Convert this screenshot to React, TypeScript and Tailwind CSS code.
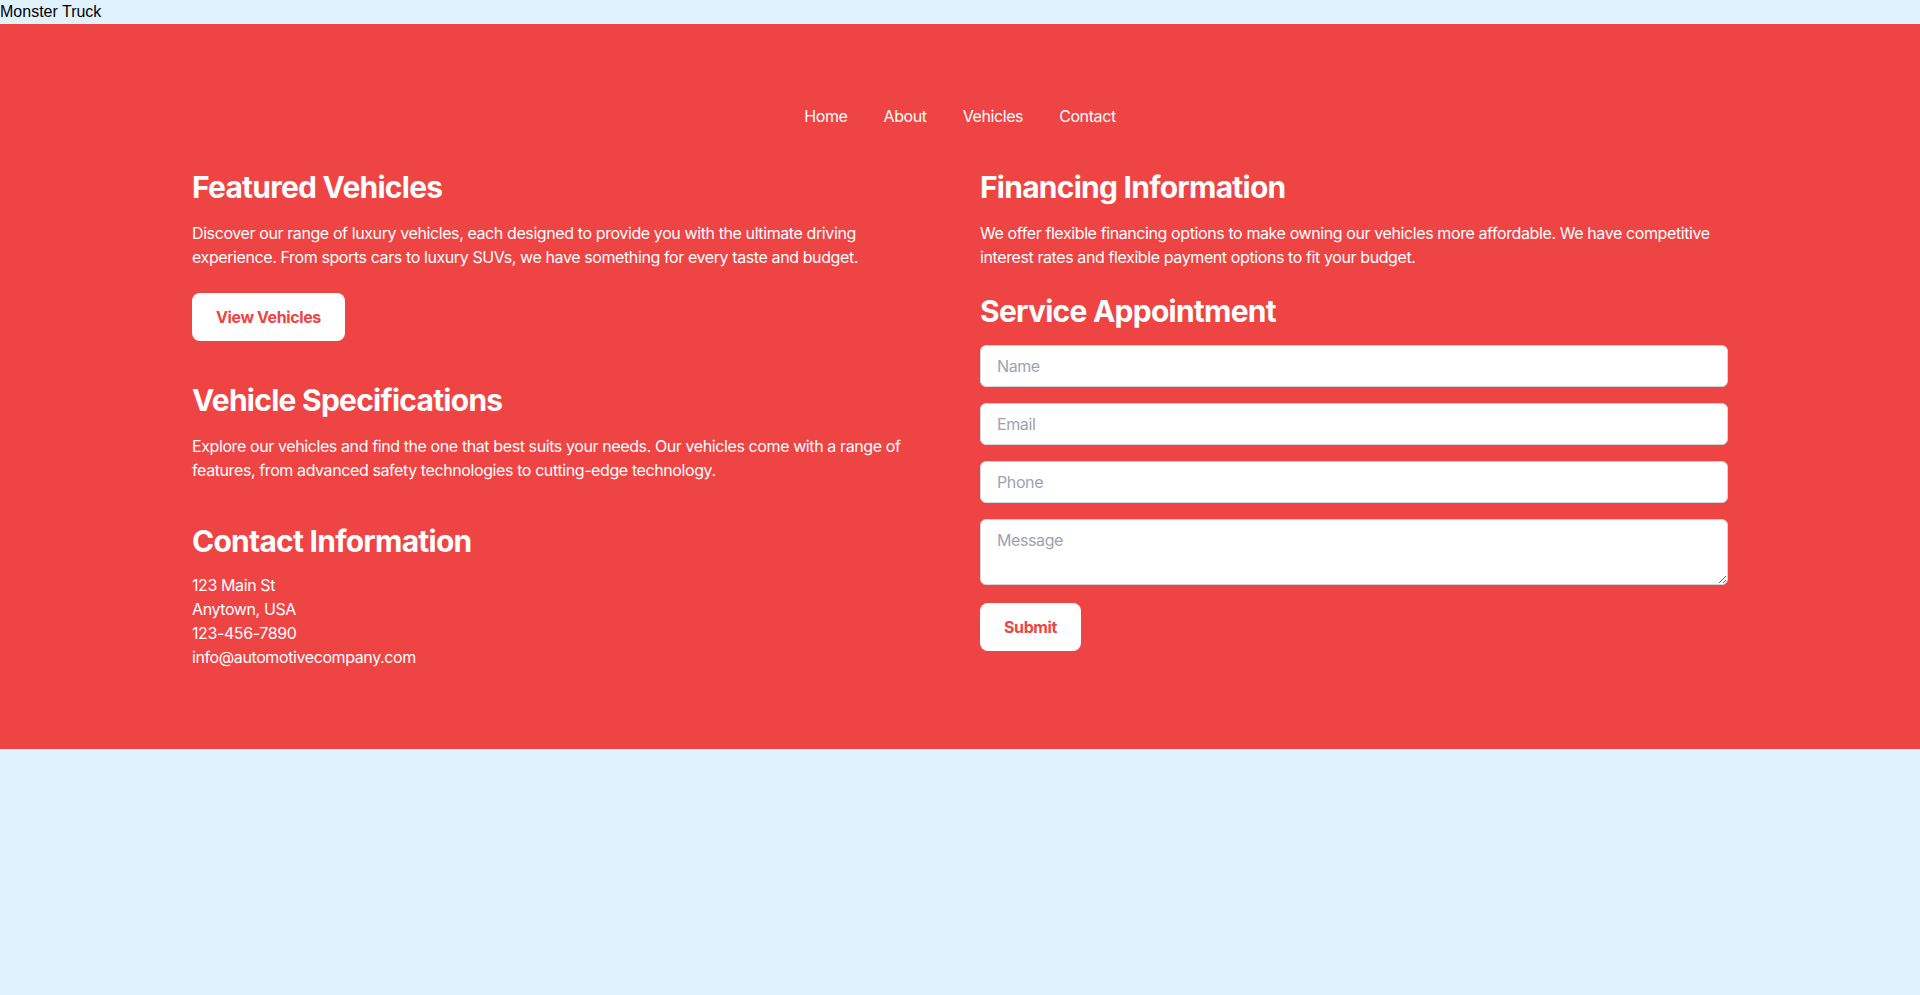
import { FormEvent } from "react";

const links = ["Home", "About", "Vehicles", "Contact"];

function App() {
  const submit = (e: FormEvent) => {
    e.preventDefault();
  };

  return (
    <div className="min-h-screen bg-[#e0f2fe] font-['Inter','Noto_Sans',sans-serif] text-base tracking-[-0.025em]">
      <div className="font-['Liberation_Sans',Arial,sans-serif] leading-6 tracking-normal text-black">
        Monster Truck
      </div>

      <section className="bg-[#ef4444] pt-20 pb-20 text-white">
        <nav className="mb-[41px] flex justify-center gap-9 leading-6">
          {links.map((l) => (
            <a key={l} href="#" className="hover:underline">
              {l}
            </a>
          ))}
        </nav>

        <div className="mx-auto grid max-w-[1536px] grid-cols-2 gap-10">
          <div>
            <div className="mb-[41px]">
              <h2 className="mb-4 text-3xl font-bold tracking-tight">
                Featured Vehicles
              </h2>
              <p className="leading-6">
                Discover our range of luxury vehicles, each designed to provide
                you with the ultimate driving experience. From sports cars to
                luxury SUVs, we have something for every taste and budget.
              </p>
              <button className="mt-6 rounded-lg bg-white px-6 py-3 leading-6 font-bold text-[#ef4444]">
                View Vehicles
              </button>
            </div>

            <div className="mb-[41px]">
              <h2 className="mb-4 text-3xl font-bold tracking-tight">
                Vehicle Specifications
              </h2>
              <p className="leading-6">
                Explore our vehicles and find the one that best suits your
                needs. Our vehicles come with a range of features, from advanced
                safety technologies to cutting-edge technology.
              </p>
            </div>

            <div>
              <h2 className="mb-[14px] text-3xl font-bold tracking-tight">
                Contact Information
              </h2>
              <p className="leading-6">123 Main St</p>
              <p className="leading-6">Anytown, USA</p>
              <p className="leading-6">123-456-7890</p>
              <p className="leading-6">info@automotivecompany.com</p>
            </div>
          </div>

          <div>
            <div className="mb-6">
              <h2 className="mb-4 text-3xl font-bold tracking-tight">
                Financing Information
              </h2>
              <p className="leading-6">
                We offer flexible financing options to make owning our vehicles
                more affordable. We have competitive interest rates and flexible
                payment options to fit your budget.
              </p>
            </div>

            <div>
              <h2 className="mb-4 text-3xl font-bold tracking-tight">
                Service Appointment
              </h2>
              <form onSubmit={submit} className="flex flex-col gap-4">
                <input
                  type="text"
                  placeholder="Name"
                  className="w-full rounded-md border border-gray-300 bg-white px-4 py-2 leading-6 text-gray-900 placeholder:text-[#9ca3af]"
                />
                <input
                  type="email"
                  placeholder="Email"
                  className="w-full rounded-md border border-gray-300 bg-white px-4 py-2 leading-6 text-gray-900 placeholder:text-[#9ca3af]"
                />
                <input
                  type="tel"
                  placeholder="Phone"
                  className="w-full rounded-md border border-gray-300 bg-white px-4 py-2 leading-6 text-gray-900 placeholder:text-[#9ca3af]"
                />
                <textarea
                  placeholder="Message"
                  rows={2}
                  className="block w-full rounded-md border border-gray-300 bg-white px-4 py-2 leading-6 text-gray-900 placeholder:text-[#9ca3af]"
                />
                <div className="mt-0.5">
                  <button
                    type="submit"
                    className="rounded-lg bg-white px-6 py-3 leading-6 font-bold text-[#ef4444]"
                  >
                    Submit
                  </button>
                </div>
              </form>
            </div>
          </div>
        </div>
      </section>
    </div>
  );
}

export default App;
